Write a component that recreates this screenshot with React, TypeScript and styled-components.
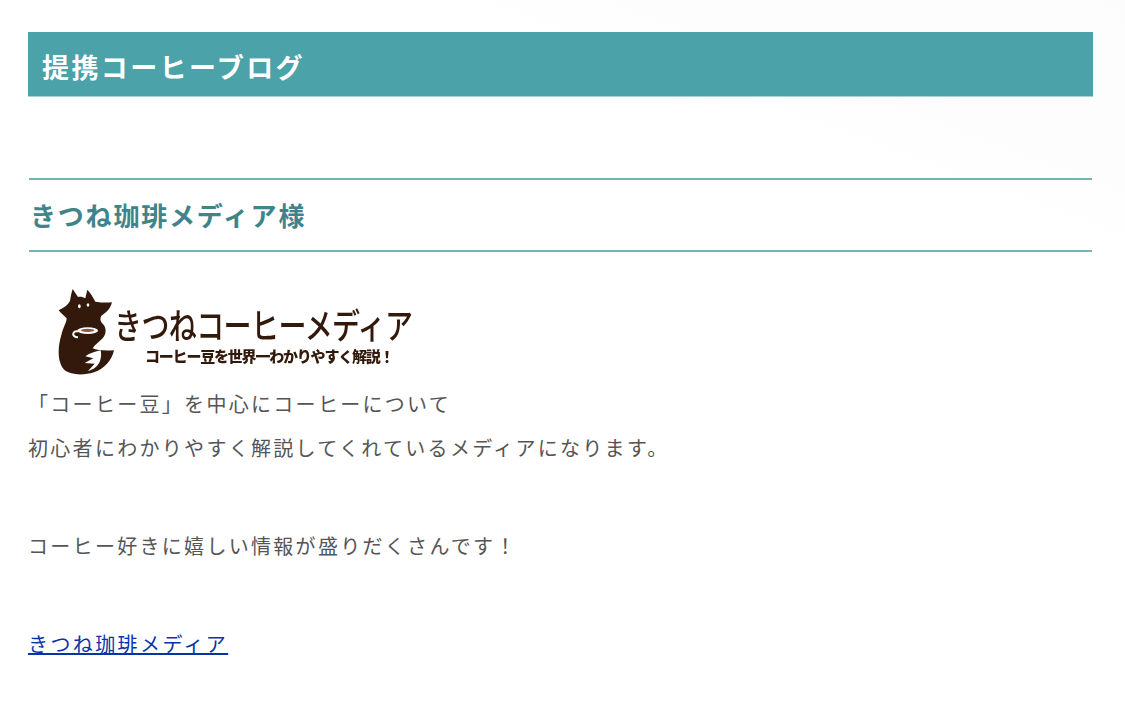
import React from "react";
import styled, { createGlobalStyle } from "styled-components";

const GlobalStyle = createGlobalStyle`
	html, body {
		margin: 0;
		padding: 0;
		background: #fff;
	}
	body {
		font-family: "Noto Sans CJK JP", "Noto Sans", sans-serif;
	}
`;

const Page = styled.div`
	width: 1125px;
	height: 728px;
	box-sizing: border-box;
	padding: 32px 32px 0 28px;
	overflow: hidden;
	background: linear-gradient(200deg, #fcfcfc 0, #fdfdfd 14%, #fff 24%);
`;

const Banner = styled.h2`
	margin: 0;
	height: 65px;
	padding: 5px 0 0 14px;
	display: flex;
	align-items: center;
	background: #4ba2a9;
	border-bottom: 1px solid #a9d2d5;
	box-sizing: border-box;
	color: #fff;
	font-size: 27px;
	font-weight: 700;
	letter-spacing: 2.4px;
`;

const SubHeading = styled.h3`
	margin: 81px 1px 0 1px;
	height: 74px;
	padding: 0 0 2px 1px;
	display: flex;
	align-items: center;
	box-sizing: border-box;
	border-top: 2px solid #74b4b9;
	border-bottom: 2px solid #74b4b9;
	color: #3f848a;
	font-size: 26px;
	font-weight: 700;
	letter-spacing: 1.8px;
`;

const Logo = styled.div`
	margin: 33px 0 0 22px;
	display: flex;
	height: 95px;
	filter: blur(0.35px);
`;

const Fox = styled.svg`
	width: 80px;
	height: 95px;
	flex: none;
`;

const LogoText = styled.div`
	display: flex;
	flex-direction: column;
	align-items: flex-start;
	margin-left: -16px;
	color: #33190c;
`;

const LogoName = styled.div`
	margin-top: 24px;
	font-size: 28px;
	line-height: 30px;
	font-weight: 500;
	letter-spacing: -0.6px;
	white-space: nowrap;
	transform: scaleY(1.25);
`;

const LogoTagline = styled.div`
	margin: 8px 0 0 31px;
	font-size: 15px;
	line-height: 18px;
	font-weight: 900;
	letter-spacing: -1.2px;
	white-space: nowrap;
`;

const Paragraph = styled.p<{ $gap: number }>`
	margin: ${(p) => p.$gap}px 0 0;
	color: #555;
	font-size: 20px;
	line-height: 32px;
	letter-spacing: 2.3px;
	white-space: nowrap;
`;

const BlogLink = styled.a`
	color: #0a33a8;
	font-size: 20px;
	line-height: 32px;
	letter-spacing: 2.4px;
	text-decoration: underline;
`;

export default function App() {
	return (
		<Page>
			<GlobalStyle />
			<Banner>提携コーヒーブログ</Banner>
			<SubHeading>きつね珈琲メディア様</SubHeading>
			<Logo>
				<Fox viewBox="0 0 240 285">
					<path
						fill="#33190c"
						d="M68 12 L84 36 C92 34 100 36 106 40 L112 14 C122 24 130 38 136 50 C150 52 168 54 186 52 C182 68 172 82 154 92 C150 100 150 106 156 114 C170 126 170 146 158 160 C146 172 134 180 128 190 C140 196 166 198 192 196 C186 224 164 252 132 262 C100 272 62 270 44 256 C22 234 22 190 34 150 C40 126 50 112 50 100 C42 92 32 84 26 76 C42 68 54 60 60 48 C62 36 64 24 68 12 Z"
					/>
					<ellipse cx="88" cy="64" rx="4" ry="6" fill="#fff" />
					<ellipse cx="114" cy="60" rx="4" ry="5" fill="#fff" />
					<path fill="none" stroke="#fff" strokeWidth="6" d="M84 139 C66 135 64 158 84 157" />
					<ellipse cx="113" cy="137" rx="31" ry="10" fill="#fff" />
					<ellipse cx="113" cy="136" rx="20" ry="5" fill="#8a5a3c" />
					<path
						fill="#fff"
						d="M152 196 C136 200 120 204 106 214 L130 220 L104 234 L134 236 L114 258 C130 254 144 244 150 228 C154 216 154 206 152 196 Z"
					/>
				</Fox>
				<LogoText>
					<LogoName>きつねコーヒーメディア</LogoName>
					<LogoTagline>コーヒー豆を世界一わかりやすく解説！</LogoTagline>
				</LogoText>
			</Logo>
			<Paragraph $gap={8}>「コーヒー豆」を中心にコーヒーについて</Paragraph>
			<Paragraph $gap={12}>初心者にわかりやすく解説してくれているメディアになります。</Paragraph>
			<Paragraph $gap={66}>コーヒー好きに嬉しい情報が盛りだくさんです！</Paragraph>
			<Paragraph $gap={66}>
				<BlogLink href="#">きつね珈琲メディア</BlogLink>
			</Paragraph>
		</Page>
	);
}
